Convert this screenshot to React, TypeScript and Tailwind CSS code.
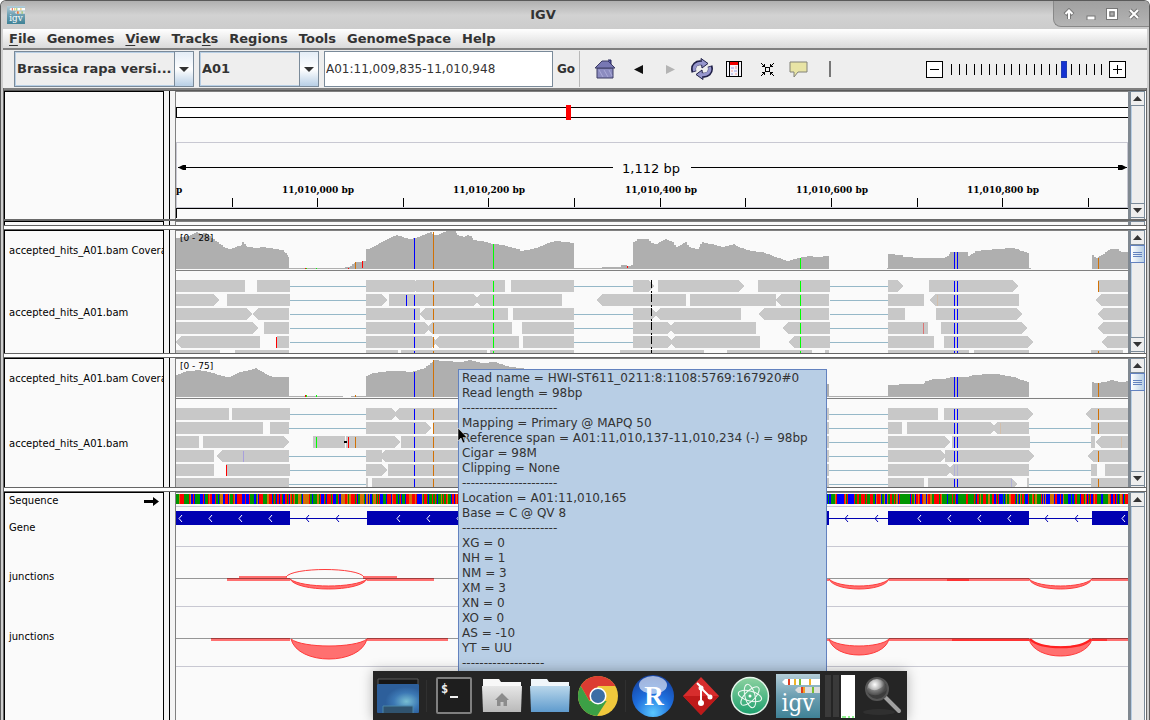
import React from "react";

type Pt = [number, number];
type Read = [number, number, ("l" | "r")?];
type Mark = [number, number, number, string];

const GREEN = "#00ff00";
const BLUE = "#0000ff";
const ORANGE = "#d17105";
const RED = "#ff0000";

/* Staircase outline of a coverage histogram segment. */
function stairs(points: Pt[], base: number): string {
  let d = `M${points[0][0]} ${base}`;
  for (let i = 0; i < points.length - 1; i++) {
    const [x1, y1] = points[i];
    const [x2, y2] = points[i + 1];
    const n = Math.max(1, Math.round((x2 - x1) / 2));
    for (let k = 0; k < n; k++) {
      const y = Math.round(y1 + ((y2 - y1) * k) / n);
      d += `V${y}H${Math.round(x1 + ((x2 - x1) * (k + 1)) / n)}`;
    }
  }
  return d + `V${base}Z`;
}

function readPath([a, b, dir]: Read, y: number): string {
  if (dir === "r") return `M${a} ${y}H${b - 5}L${b} ${y + 6}L${b - 5} ${y + 12}H${a}Z`;
  if (dir === "l") return `M${a + 5} ${y}H${b}V${y + 12}H${a + 5}L${a} ${y + 6}Z`;
  return `M${a} ${y}H${b}V${y + 12}H${a}Z`;
}

const coverageOne: Pt[][] = [
  [[176, 238], [182, 237], [190, 235], [196, 232], [200, 234], [205, 233], [209, 236], [213, 239], [217, 242], [221, 245], [223, 247], [228, 249], [235, 247], [241, 245], [242, 242], [244, 244], [247, 247], [257, 248], [262, 247], [275, 249], [282, 250], [285, 253], [288, 257], [289, 258]],
  [[345, 267], [348, 267], [352, 264], [355, 262], [366, 261]],
  [[366, 249], [370, 248], [374, 246], [383, 241], [389, 238], [393, 236], [396, 235], [402, 237], [408, 239], [415, 238], [420, 236], [425, 234], [430, 232], [433, 235], [437, 235], [441, 233], [446, 231], [454, 231], [457, 235], [463, 237], [467, 235], [470, 236], [473, 240], [480, 241], [486, 242], [493, 244], [503, 245], [510, 247], [518, 249], [520, 251], [526, 250], [532, 249], [538, 247], [545, 244], [550, 242], [556, 241], [565, 242], [574, 243]],
  [[602, 267], [620, 267], [621, 265], [626, 265], [627, 266], [633, 265]],
  [[633, 242], [637, 239], [647, 239], [651, 243], [656, 244], [661, 241], [665, 239], [672, 242], [676, 247], [680, 245], [685, 242], [689, 247], [697, 249], [702, 242], [710, 244], [723, 247], [733, 244], [738, 247], [750, 251], [762, 252], [772, 256], [781, 259], [788, 261], [797, 258], [809, 256], [815, 257], [829, 256]],
  [[888, 254], [901, 255], [903, 257], [923, 258], [943, 258], [947, 256], [950, 252], [966, 252], [968, 256], [973, 253], [975, 251], [996, 249], [1013, 248], [1017, 249], [1020, 251], [1029, 253]],
  [[1092, 255], [1096, 258], [1101, 255], [1105, 252], [1110, 249], [1117, 249], [1121, 252], [1128, 252]],
];

const coverageTwo: Pt[][] = [
  [[176, 375], [181, 373], [186, 371], [190, 371], [197, 370], [205, 371], [213, 373], [221, 376], [229, 377], [237, 373], [243, 371], [250, 370], [255, 368], [260, 371], [267, 375], [274, 377], [280, 377], [289, 377]],
  [[366, 376], [372, 373], [390, 371], [402, 371], [410, 372], [415, 371], [424, 368], [430, 363], [433, 360], [445, 361], [460, 362], [470, 360], [480, 363], [495, 362], [505, 366], [520, 368], [540, 372], [574, 374]],
  [[633, 374], [700, 375], [760, 378], [829, 384]],
  [[888, 385], [907, 384], [922, 384], [925, 381], [932, 379], [942, 379], [952, 377], [965, 377], [974, 375], [988, 374], [996, 374], [1007, 376], [1014, 377], [1020, 380], [1029, 382]],
  [[1092, 382], [1096, 383], [1103, 382], [1110, 380], [1120, 382], [1128, 381]],
];

const readsOne: Read[][] = [
  [[176, 245], [257, 290], [366, 420, "r"], [416, 505], [511, 574], [633, 654, "r"], [658, 744, "r"], [758, 830], [888, 903, "r"], [929, 1018, "r"], [1098, 1128]],
  [[176, 219, "r"], [227, 290], [366, 387, "r"], [389, 479, "r"], [475, 562, "l"], [597, 686, "l"], [690, 776], [776, 829, "l"], [888, 924], [930, 1019, "l"], [1096, 1128, "l"]],
  [[176, 252, "r"], [253, 289, "l"], [366, 420], [420, 508, "l"], [513, 574], [633, 657, "r"], [655, 741, "l"], [759, 829, "l"], [888, 905], [936, 1022, "r"], [1098, 1128, "l"]],
  [[176, 258, "r"], [264, 289], [366, 430, "r"], [427, 512, "l"], [522, 574], [633, 673, "r"], [669, 756, "l"], [783, 830, "l"], [888, 928], [941, 1027, "r"], [1098, 1128, "l"]],
  [[176, 260, "l"], [277, 289], [366, 437, "r"], [434, 519, "l"], [523, 574], [633, 673, "r"], [670, 760, "l"], [789, 830, "l"], [888, 934], [944, 1033, "r"], [1102, 1128, "l"]],
  [[176, 220], [235, 289], [366, 398], [401, 487], [490, 574], [620, 704], [727, 812], [825, 829], [888, 969], [974, 1029], [1091, 1123]],
];

const readsTwo: Read[][] = [
  [[176, 229], [232, 290], [366, 397, "r"], [394, 500, "l"], [827, 829], [888, 938], [944, 1033, "r"], [1086, 1128, "l"]],
  [[176, 263], [270, 289], [366, 431, "r"], [433, 500], [827, 829], [888, 902], [907, 996, "r"], [992, 1029, "l"], [1091, 1128]],
  [[176, 199], [203, 289, "r"], [313, 345], [346, 400, "r"], [401, 500], [827, 829], [888, 950, "r"], [952, 1030], [1091, 1095], [1096, 1128, "l"]],
  [[176, 214], [217, 289, "l"], [366, 382], [380, 500, "l"], [827, 829], [888, 946, "r"], [945, 1034, "r"], [1088, 1128, "l"]],
  [[176, 214], [226, 290], [366, 387, "r"], [388, 500], [827, 829], [888, 952, "r"], [948, 1029, "l"], [1091, 1097], [1105, 1128]],
  [[176, 289], [366, 368], [372, 500], [827, 829], [888, 924], [928, 1017, "r"], [1027, 1029], [1091, 1128]],
];

/* [row, x1, x2] of spliced gaps. */
const gapsOne = [0, 1, 2, 3, 4].flatMap((r) =>
  ([[290, 367], [574, 633], [830, 889]] as Pt[])
    .filter((g) => !(r === 1 && g[0] === 574))
    .map((g): [number, number, number] => [r, g[0], g[1]])
);
const gapsTwo: [number, number, number][] = [
  ...[0, 1, 3, 4, 5].map((r): [number, number, number] => [r, 289, 367]),
  ...[0, 1, 2, 3, 4, 5].map((r): [number, number, number] => [r, 829, 889]),
  ...[1, 2, 4, 5].map((r): [number, number, number] => [r, 1029, 1092]),
];

const row = (x: number, top: number, rows: number[], color: string): Mark[] =>
  rows.map((r) => [x, top + r * 14 + 1, 11, color]);

const marksOne: Mark[] = [
  [414, 238, 31, BLUE], [433, 232, 37, ORANGE], [493, 244, 25, GREEN],
  [362, 261, 7, RED], [355, 262, 7, ORANGE], [305, 268, 1, RED], [306, 268, 1, GREEN], [316, 268, 1, GREEN], [348, 268, 1, RED],
  [627, 266, 2, RED], [800, 258, 11, GREEN], [954, 252, 17, BLUE], [957, 252, 17, BLUE], [1098, 258, 11, ORANGE],
  ...row(414, 280, [1, 2, 3, 4, 5], BLUE), ...row(406, 280, [1], BLUE),
  ...row(433, 280, [0, 1, 2, 3, 4, 5], ORANGE), ...row(493, 280, [0, 1, 2, 3, 4, 5], GREEN),
  ...row(276, 280, [4], RED), ...row(800, 280, [0, 1, 2, 3, 4, 5], GREEN),
  ...row(954, 280, [0, 1, 2, 3, 4, 5], BLUE), ...row(957, 280, [0, 1, 2, 3, 4, 5], BLUE),
  ...row(1098, 280, [0, 5], ORANGE), ...row(923, 280, [3], "#dc7373"), ...row(937, 280, [1], "#d2beaa"),
];

const marksTwo: Mark[] = [
  [414, 372, 25, BLUE], [433, 360, 37, ORANGE], [305, 395, 2, RED], [306, 395, 2, GREEN], [316, 395, 2, GREEN], [355, 395, 2, ORANGE],
  [954, 377, 20, BLUE], [957, 377, 20, BLUE], [1098, 383, 14, ORANGE],
  ...row(414, 408, [0, 1, 2, 3, 4, 5], BLUE), ...row(433, 408, [0, 1, 2, 3, 4, 5], ORANGE),
  ...row(954, 408, [0, 1, 2, 3, 5], BLUE), ...row(957, 408, [0, 1, 2, 3, 5], BLUE),
  ...row(954, 408, [4], "#b0b0d8"), ...row(957, 408, [4], "#b0b0d8"),
  ...row(1098, 408, [0, 1, 3, 5], ORANGE), ...row(316, 408, [2], GREEN), ...row(348, 408, [2], RED), ...row(355, 408, [2], ORANGE),
  ...row(243, 408, [3], "#a8a0dc"), ...row(226, 408, [4], RED), ...row(1000, 408, [1], "#d2beaa"), ...row(1121, 408, [2], "#d2beaa"),
  ...row(1011, 408, [5], "#b0b0d8"),
];

function AlignmentChart({
  top, height, base, coverage, baseline, firstRow, reads, gaps, marks, range, children,
}: {
  top: number; height: number; base: number; coverage: Pt[][]; baseline: Pt[]; firstRow: number;
  reads: Read[][]; gaps: [number, number, number][]; marks: Mark[]; range: string; children?: React.ReactNode;
}) {
  return (
    <svg width="100%" height={height} className="block" shapeRendering="crispEdges">
      <g transform={`translate(-176 ${-top})`}>
        {coverage.map((c, i) => <path key={i} d={stairs(c, base)} fill="#afafaf" />)}
        {baseline.map(([a, b]) => <rect key={a} x={a} y={base - 1} width={b - a} height={1} fill="#afafaf" />)}
        <rect x={176} y={base + 1} width={4000} height={1} fill="#808080" />
        {gaps.map(([r, a, b], i) => <rect key={i} x={a} y={firstRow + r * 14 + 6} width={b - a} height={1} fill="#96b8c8" />)}
        {reads.map((list, r) => <path key={r} d={list.map((x) => readPath(x, firstRow + r * 14)).join("")} fill="#c8c8c8" />)}
        {marks.map(([x, y, h, c], i) => <rect key={i} x={x} y={y} width={1} height={h} fill={c} />)}
        {children}
        <text x={180} y={top + 10} fontSize={9} className="font-['DejaVu_Sans',sans-serif]">{range}</text>
      </g>
    </svg>
  );
}

/* Nucleotide colour strip, one column per pixel. */
const sequence = (() => {
  const colors = ["#009600", "#ff0000", "#0000ff", "#d17105"];
  const paths = ["", "", "", ""];
  let seed = 20117;
  let x = 176;
  while (x < 1128) {
    seed = (seed * 1103515245 + 12345) % 2147483648;
    const v = (seed >> 8) % 100;
    const c = v < 32 ? 0 : v < 62 ? 1 : v < 82 ? 2 : 3;
    const w = 1 + ((seed >> 17) % 10 < 6 ? 0 : (seed >> 20) % 3);
    paths[c] += `M${x} 494h${w}v10h${-w}z`;
    x += w;
  }
  return paths.map((d, i) => ({ d, color: colors[i] }));
})();

const Chevron = ({ x, color }: { x: number; color: string }) => (
  <path d={`M${x + 3} 515L${x} 518.5L${x + 3} 522`} fill="none" stroke={color} strokeWidth={1} shapeRendering="auto" />
);

function arc(a: number, b: number, y: number, inner: number, outer: number): string {
  const w = (b - a) * 0.15;
  const k = (v: number) => y + ((v - y) * 4) / 3;
  return `M${a} ${y}C${a + w} ${k(inner)} ${b - w} ${k(inner)} ${b} ${y}C${b - w * 0.6} ${k(outer)} ${a + w * 0.6} ${k(outer)} ${a} ${y}Z`;
}

function FeatureChart() {
  return (
    <svg width="100%" height={228} className="block" shapeRendering="crispEdges">
      <g transform="translate(-176 -493)">
        {sequence.map((s) => <path key={s.color} d={s.d} fill={s.color} />)}
        {[506, 546, 606, 666].map((y) => <rect key={y} x={176} y={y} width={4000} height={1} fill="#c8c8d2" />)}
        <rect x={176} y={518} width={952} height={1} fill="#0000b2" />
        {([[176, 290], [367, 574], [633, 829], [888, 1029], [1092, 1128]] as Pt[]).map(([a, b]) => (
          <rect key={a} x={a} y={511} width={b - a} height={14} fill="#0000b2" />
        ))}
        {[179, 209, 239, 269, 397, 427, 457, 918, 948, 978, 1008, 1122].map((x) => <Chevron key={x} x={x} color="#ffffff" />)}
        {[306, 336, 845, 875, 1045, 1075].map((x) => <Chevron key={x} x={x} color="#0000b2" />)}

        {([[239, 287, 576, 2], [363, 397, 576, 2], [227, 290, 579, 2], [367, 434, 579, 2], [827, 829, 579, 2], [889, 1029, 579, 2], [1092, 1128, 579, 2],
          [211, 290, 639, 2], [367, 448, 639, 2], [827, 829, 639, 2], [889, 1029, 639, 2], [1092, 1128, 639, 2]] as [number, number, number, number][]).map(([a, b, y, h], i) => (
          <rect key={i} x={a} y={y} width={b - a} height={h} fill="#ff7070" />
        ))}
        {([[947, 969, 579], [952, 1029, 639], [1091, 1107, 639]] as [number, number, number][]).map(([a, b, y]) => (
          <rect key={a} x={a} y={y} width={b - a} height={2} fill="#ff3232" />
        ))}
        <rect x={176} y={578} width={4000} height={1} fill="#969696" />
        <rect x={176} y={638} width={4000} height={1} fill="#969696" />
        {([[239, 287, 578], [363, 397, 578], [227, 290, 578], [367, 434, 578], [889, 1029, 578], [1092, 1128, 578],
          [211, 290, 638], [367, 448, 638], [889, 1029, 638], [1092, 1128, 638]] as [number, number, number][]).map(([a, b, y], i) => (
          <rect key={i} x={a} y={y} width={b - a} height={1} fill="#a03c3c" />
        ))}
        <g fill="#ff7070" stroke="#ff3c3c" strokeWidth={1} shapeRendering="auto">
          <path d="M286 577C292 567 358 567 364 577" fill="none" />
          <path d={arc(290, 367, 579, 586, 589)} />
          <path d={arc(291, 367, 639, 646, 659)} />
          <path d={arc(829, 889, 579, 586, 589)} />
          <path d={arc(1029, 1092, 579, 586, 589)} />
          <path d={arc(829, 889, 639, 646, 655)} />
          <path d={arc(1029, 1092, 639, 647, 656)} />
          <path d="M1030 639C1041 650 1081 650 1091 639" fill="none" stroke="#ff2020" strokeWidth={2} />
        </g>
      </g>
    </svg>
  );
}

function RulerChart() {
  const labels: [number, string][] = [[318, "11,010,000 bp"], [489, "11,010,200 bp"], [661, "11,010,400 bp"], [832, "11,010,600 bp"], [1003, "11,010,800 bp"]];
  return (
    <svg width="100%" height={127} className="block" shapeRendering="crispEdges">
      <rect width="100%" x={0} y={16} height={10} fill="#ffffff" />
      <rect width="100%" x={0} y={15} height={1} />
      <rect width="100%" x={0} y={25} height={1} />
      <g transform="translate(-176 -92)">
        <rect x={176} y={107} width={1} height={11} />
        <rect x={566} y={105} width={5} height={15} fill="#ff0000" />
        <path d="M176.5 207.5V142.5H1127.5V207.5Z" fill="none" stroke="#c8c8d2" />
        <path d="M178 167.5H613M691 167.5H1127" stroke="#000" />
        <path d="M178 167.5L183 165H186V170H183ZM1127 167.5L1122 165H1118V170H1122Z" shapeRendering="auto" />
        {[232, 317, 403, 488, 574, 660, 745, 831, 917, 1002, 1088].map((x) => <rect key={x} x={x} y={198} width={1} height={9} />)}
        <path d="M176.5 218V208.5H4000" fill="none" stroke="#000" />
        <text x={651} y={173} fontSize={13} textAnchor="middle" className="font-['DejaVu_Sans',sans-serif]">1,112 bp</text>
        <g fontSize={10} fontWeight={700} textAnchor="middle" className="font-['DejaVu_Serif_Condensed','DejaVu_Serif',serif]">
          {labels.map(([x, t]) => <text key={t} x={x} y={193}>{t}</text>)}
          <text x={176} y={193} textAnchor="start">p</text>
        </g>
      </g>
    </svg>
  );
}

function ScrollBar({ thumb, down = true }: { thumb?: boolean; down?: boolean }) {
  return (
    <div className="flex w-[18px] shrink-0 flex-col border-l-2 border-[#808890] bg-white pr-px">
      <div className="flex min-h-0 flex-1 flex-col border-x border-t border-[#7a8a99] bg-[#eeeeee]">
        <button aria-label="Scroll up" className="flex h-[14px] shrink-0 items-center justify-center border-b border-[#7a8a99] bg-[#eeeeee]">
          <svg width="9" height="5"><path d="M0 5L4.5 0L9 5Z" fill="#333" /></svg>
        </button>
        {thumb && (
          <div className="-mx-px flex h-[18px] shrink-0 flex-col items-center justify-center gap-px border border-[#6382bf] bg-linear-to-r from-white to-[#b8cfe5]">
            <span className="h-px w-[9px] bg-[#6382bf]" />
            <span className="h-px w-[9px] bg-[#6382bf]" />
            <span className="h-px w-[9px] bg-[#6382bf]" />
          </div>
        )}
        <div className="min-h-0 flex-1 border-l border-[#b8cfe5]" />
        {down && (
          <button aria-label="Scroll down" className="mb-px flex h-[15px] shrink-0 items-center justify-center border-y border-[#7a8a99] bg-[#eeeeee]">
            <svg width="9" height="5"><path d="M0 0L4.5 5L9 0Z" fill="#333" /></svg>
          </button>
        )}
      </div>
    </div>
  );
}

function Panel({ names, children, thumb, down, className }: { names?: React.ReactNode; children?: React.ReactNode; thumb?: boolean; down?: boolean; className: string }) {
  return (
    <section className={"flex min-h-0 overflow-hidden " + className}>
      <div className="flex w-[160px] shrink-0 flex-col overflow-hidden border border-b-0 border-black text-[10px] leading-4 whitespace-nowrap text-black">{names}</div>
      <div className="w-[5px] shrink-0 bg-[#f4f4f4]" />
      <div className="w-px shrink-0 bg-black" />
      <div className="w-[5px] shrink-0 bg-[#f4f4f4]" />
      <div className="min-w-0 flex-1 overflow-hidden border-t border-l border-[#808080]">{children}</div>
      <ScrollBar thumb={thumb} down={down} />
    </section>
  );
}

function Name({ children, className }: { children: React.ReactNode; className: string }) {
  return <div className={"flex shrink-0 items-center pl-[4px] " + className}>{children}</div>;
}

function Combo({ label, value, className }: { label: string; value: string; className: string }) {
  return (
    <div className={"relative h-9 border border-[#7a8a99] " + className}>
      <select aria-label={label} className="h-full w-full appearance-none border border-[#b8cfe5] bg-[#eeeeee] pr-5 pl-px text-[13px] font-bold text-[#333] outline-none">
        <option>{value}</option>
      </select>
      <span className="pointer-events-none absolute inset-y-0 right-0 flex w-[19px] items-center justify-center border-l border-[#7a8a99] bg-linear-to-b from-[#e4edf6] via-white to-[#b8cfe5]">
        <svg width="10" height="5"><path d="M0 0H10L5 5Z" fill="#333" /></svg>
      </span>
    </div>
  );
}

const menus: [string, string, string][] = [
  ["", "F", "ile"], ["Genomes", "", ""], ["", "V", "iew"], ["Trac", "k", "s"], ["Regions", "", ""], ["Tools", "", ""], ["GenomeSpace", "", ""], ["Help", "", ""],
];

const details = [
  "Read name = HWI-ST611_0211:8:1108:5769:167920#0", "Read length = 98bp", "----------------------", "Mapping = Primary @ MAPQ 50",
  "Reference span = A01:11,010,137-11,010,234 (-) = 98bp", "Cigar = 98M", "Clipping = None", "----------------------",
  "Location = A01:11,010,165", "Base = C @ QV 8", "----------------------", "XG = 0", "NH = 1", "NM = 3", "XM = 3", "XN = 0", "XO = 0", "AS = -10", "YT = UU", "-------------------",
];

function IgvLogo({ size }: { size: number }) {
  return (
    <svg width={size} height={size} viewBox="0 0 44 44">
      <defs><linearGradient id="igv-bg" x2="0" y2="1"><stop offset="0" stopColor="#b4cdd8" /><stop offset=".5" stopColor="#6d9fb2" /><stop offset="1" stopColor="#3f8296" /></linearGradient></defs>
      <rect width="44" height="44" fill="url(#igv-bg)" />
      <path d="M6 8L9 5H44V11H9Z" fill="#fff" />
      <path d="M22 13H44V19H22L19 16Z" fill="#dcdcdc" />
      <path d="M13 5v6M26 13v6" stroke="#e03c1e" strokeWidth="2" />
      <path d="M19 5v6M34 5v6" stroke="#f0b428" strokeWidth="2" />
      <path d="M24 5v6M37 13v6" stroke="#78be32" strokeWidth="2" />
      <path d="M28 13v6" stroke="#f0a028" strokeWidth="2" />
      <text x="22" y="37" textAnchor="middle" fontSize="24" fill="#fff" className="font-['DejaVu_Serif_Condensed','DejaVu_Serif',serif]">igv</text>
    </svg>
  );
}

function DockButton({ label, children, className }: { label: string; children: React.ReactNode; className: string }) {
  return <button aria-label={label} className={"flex shrink-0 items-center justify-center " + className}>{children}</button>;
}

function Dock() {
  return (
    <nav aria-label="Dock" className="absolute bottom-0 left-[372px] flex h-[49px] w-[534px] items-center bg-[#252525] pl-1 shadow-[0_0_12px_rgba(0,0,0,0.3)]">
      <DockButton label="Show desktop" className="w-[42px]">
        <svg width="42" height="36"><defs><radialGradient id="desk" cx=".7" cy=".6"><stop offset="0" stopColor="#78bed2" /><stop offset=".6" stopColor="#3c78b4" /><stop offset="1" stopColor="#2d5f9b" /></radialGradient></defs>
          <path d="M1 6V1H41V6" fill="#161616" stroke="#5a5a5a" /><rect y="6" width="42" height="29" rx="1" fill="url(#desk)" /><path d="M6 35V28H36V35" fill="#30536e" stroke="#4b87a8" /></svg>
      </DockButton>
      <span className="mx-[7px] h-8 w-px bg-[#303030]" />
      <DockButton label="Terminal" className="ml-[2px] w-[36px]">
        <svg width="36" height="37"><rect x="1" y="1" width="34" height="35" rx="1" fill="#1e1e1e" stroke="#808080" strokeWidth="2" /><text x="5" y="16" fontSize="12" fontWeight="700" fill="#f0f0f0" className="font-['DejaVu_Sans_Mono',monospace]">$</text><path d="M14 20H22" stroke="#f0f0f0" strokeWidth="2" /></svg>
      </DockButton>
      <DockButton label="Home folder" className="ml-[9px] w-[42px]">
        <svg width="42" height="35"><defs><linearGradient id="fg" x2="0" y2="1"><stop offset="0" stopColor="#e6e6e6" /><stop offset="1" stopColor="#b9b9b9" /></linearGradient></defs>
          <path d="M2 1H18L20 4H40V10H2Z" fill="#f8f8f8" /><path d="M1 8H41L40 34H2Z" fill="url(#fg)" /><path d="M21 15L28 22H26V28H22.500V24H19.500V28H16V22H14Z" fill="#8c8c8c" /></svg>
      </DockButton>
      <DockButton label="Files" className="ml-[6px] w-[42px]">
        <svg width="42" height="35"><defs><linearGradient id="fb" x2="0" y2="1"><stop offset="0" stopColor="#b9d7eb" /><stop offset="1" stopColor="#5f9bcd" /></linearGradient></defs>
          <path d="M2 1H18L20 4H40V10H2Z" fill="#f0f6fa" /><path d="M1 8H41L40 34H2Z" fill="url(#fb)" /></svg>
      </DockButton>
      <DockButton label="Browser" className="ml-[6px] w-[42px]">
        <svg width="42" height="42" viewBox="-21 -21 42 42"><circle r="20" fill="#f0c83c" /><path d="M-17.300 -10A20 20 0 0 1 17.300 -10H0L-8.700 5Z" fill="#dc3c32" /><path d="M-17.300 -10L-8.700 5L0 10L-1 20A20 20 0 0 1 -17.300 -10Z" fill="#3ca046" /><path d="M-1 20L8.700 5L-8.700 5Z" fill="#3ca046" /><circle r="8.500" fill="#fff" /><circle r="7" fill="#3c6ea5" /></svg>
      </DockButton>
      <span className="mx-[6px] h-8 w-px bg-[#303030]" />
      <DockButton label="R" className="w-[42px]">
        <svg width="42" height="44"><defs><radialGradient id="rg" cx=".5" cy=".9" r=".9"><stop offset="0" stopColor="#5ac8ff" /><stop offset=".5" stopColor="#1e6edc" /><stop offset="1" stopColor="#1440a0" /></radialGradient></defs>
          <circle cx="21" cy="22" r="21" fill="url(#rg)" /><ellipse cx="21" cy="11" rx="14" ry="9" fill="#fff" opacity=".6" /><text x="22" y="31" textAnchor="middle" fontSize="27" fontWeight="700" fill="#fff" className="font-['Liberation_Serif',serif]">R</text></svg>
      </DockButton>
      <DockButton label="Git" className="ml-2 w-[38px]">
        <svg width="38" height="40"><path d="M19 1L37 20L19 39L1 20Z" fill="#d72d2d" /><path d="M19 20H37L19 39L1 20Z" fill="#be1919" /><path d="M15 7L19 11V27M19 12L28 21" stroke="#fff" strokeWidth="2" fill="none" /><circle cx="19" cy="12" r="2.500" fill="#fff" /><circle cx="19" cy="27" r="3" fill="#fff" /><circle cx="28" cy="21" r="2.500" fill="#fff" /></svg>
      </DockButton>
      <DockButton label="Atom" className="ml-[10px] w-[40px]">
        <svg width="40" height="40" viewBox="-20 -20 40 40"><defs><linearGradient id="at" x2="0" y2="1"><stop offset="0" stopColor="#8cd2a0" /><stop offset="1" stopColor="#1ea06e" /></linearGradient></defs>
          <circle r="18.500" fill="url(#at)" stroke="#e6f5ec" strokeWidth="1.500" /><g fill="none" stroke="#f0faf4" strokeWidth="1"><ellipse rx="12" ry="5" transform="rotate(15)" /><ellipse rx="12" ry="5" transform="rotate(75)" /><ellipse rx="12" ry="5" transform="rotate(135)" /></g><circle r="1.500" fill="#fff" /></svg>
      </DockButton>
      <DockButton label="IGV" className="ml-[6px] w-[44px]"><IgvLogo size={44} /></DockButton>
      <svg width="34" height="44" className="ml-1 shrink-0"><path d="M1 1h6v42h-6zM9 1h6v42h-6z" fill="#3a3a3a" /><rect x="17" y="1" width="14" height="43" fill="#fff" /><path d="M18 43h4M24 43h2M28 43h2" stroke="#1ee61e" strokeWidth="1" /></svg>
      <DockButton label="Search" className="ml-[3px] w-[42px]">
        <svg width="42" height="42"><defs><radialGradient id="mg" cx=".4" cy=".3"><stop offset="0" stopColor="#fff" /><stop offset=".5" stopColor="#b4b4b4" /><stop offset="1" stopColor="#3c3c3c" /></radialGradient></defs>
          <ellipse cx="18" cy="37" rx="16" ry="3" fill="#303030" /><path d="M24 22L38 36" stroke="#a0a0a0" strokeWidth="4" strokeLinecap="round" /><circle cx="16" cy="14" r="11" fill="url(#mg)" stroke="#555" strokeWidth="2" /><path d="M6 15Q16 22 26 11" stroke="#555" fill="none" strokeWidth="5" opacity=".5" /></svg>
      </DockButton>
    </nav>
  );
}

const iconButton = "flex h-6 shrink-0 items-center justify-center";

export default function App() {
  return (
    <main className="relative flex h-screen flex-col overflow-hidden rounded-t-md border-x border-t border-[#5a5a5a] bg-[#cfcfcf] px-[2px] font-['DejaVu_Sans',sans-serif] text-[12px] text-[#333]">
      <header className="-mx-[2px] grid h-7 shrink-0 grid-cols-[32px_1fr_96px] bg-linear-to-b from-[#b0b0b0] via-[#d2d2d2] to-[#cccccc]">
        <div className="flex items-center pl-[6px]"><IgvLogo size={18} /></div>
        <h1 className="flex items-center justify-center text-[13px] font-bold">IGV</h1>
        <div className="mb-[2px] flex items-center justify-around rounded-bl-lg border-b border-l border-[#888] bg-linear-to-b from-[#a0a0a0] to-[#b4b4b4] px-1">
          <button aria-label="Shade"><svg width="12" height="12"><path d="M6 11V3M2 6.500L6 2.500L10 6.500" stroke="#777" strokeWidth="4" fill="none" /><path d="M6 11V3M2.500 6L6 2.500L9.500 6" stroke="#fff" strokeWidth="2" fill="none" /></svg></button>
          <button aria-label="Minimize"><svg width="12" height="12"><rect x="2" y="8" width="8" height="4" fill="#fff" stroke="#777" /></svg></button>
          <button aria-label="Maximize"><svg width="12" height="12"><path d="M1.500 1.500H10.500V10.500H1.500Z" fill="none" stroke="#777" strokeWidth="3" /><path d="M2 2H10V10H2Z" fill="none" stroke="#fff" strokeWidth="2" /><path d="M4 4H8V8H4Z" fill="#b0b0b0" stroke="#777" /></svg></button>
          <button aria-label="Close"><svg width="12" height="12"><path d="M2 2L10 10M10 2L2 10" stroke="#777" strokeWidth="4" /><path d="M2 2L10 10M10 2L2 10" stroke="#fff" strokeWidth="2" /></svg></button>
        </div>
      </header>

      <nav className="flex h-[21px] shrink-0 items-center gap-[11px] border-b-2 border-[#808080] bg-linear-to-b from-white to-[#dadada] pl-[6px] text-[13px] font-bold">
        {menus.map(([a, u, b]) => (
          <button key={a + u + b} className="leading-4">{a}{u && <span className="underline underline-offset-2">{u}</span>}{b}</button>
        ))}
      </nav>

      <div className="flex h-[38px] shrink-0 items-center bg-[#eeeeee] pr-[21px] pl-[11px]">
        <Combo label="Genome" value="Brassica rapa versi..." className="w-[180px] shrink-0" />
        <Combo label="Chromosome" value="A01" className="ml-[5px] w-[120px] shrink-0" />
        <input aria-label="Locus" defaultValue="A01:11,009,835-11,010,948" className="ml-[5px] h-9 w-[229px] shrink-0 border border-[#7a8a99] bg-white pl-px outline-none" />
        <button className="h-9 w-[27px] shrink-0 border-r border-[#b8b8b8] text-center font-bold">Go</button>
        <button aria-label="Home" className={iconButton + " ml-[13px] w-6"}>
          <svg width="22" height="20"><path d="M3 9H19V19H3Z" fill="#8c8cc0" stroke="#3c3c64" /><path d="M1 9L8 2H14L21 9Z" fill="#7878b4" stroke="#3c3c64" /><path d="M14 1H17V5" fill="#4646a0" stroke="#28285a" /><path d="M5 11L9 18M10 11L14 18M15 11L18 17" stroke="#aaaad7" /></svg>
        </button>
        <button aria-label="Back" className={iconButton + " ml-[14px] w-[14px]"}><svg width="9" height="9"><path d="M9 0V9L0 4.500Z" fill="#111" /></svg></button>
        <button aria-label="Forward" disabled className={iconButton + " ml-[18px] w-[14px]"}><svg width="9" height="9"><path d="M0 0V9L9 4.500Z" fill="#b4b4b4" /></svg></button>
        <button aria-label="Refresh" className={iconButton + " ml-[13px] w-6"}>
          <svg width="22" height="22" viewBox="0 0 22 22">
            <g id="turn">
              <path d="M3 14C1 7 6 4 11 5" fill="none" stroke="#1e1e46" strokeWidth="5" />
              <path d="M10 .500L17 5.500L11 10Z" fill="#9696cd" stroke="#1e1e46" />
              <path d="M3.500 13C2 8 6 4.500 12 5.500" fill="none" stroke="#9696cd" strokeWidth="3" />
            </g>
            <use href="#turn" transform="rotate(180 11 11)" />
          </svg>
        </button>
        <button aria-label="Region of interest" className={iconButton + " ml-[10px] w-5"}>
          <svg width="16" height="16" shapeRendering="crispEdges"><rect width="16" height="16" /><rect x="1" y="1" width="14" height="14" fill="#f4f4fa" /><rect x="3" y="1" width="1" height="14" /><rect x="12" y="1" width="1" height="14" /><rect x="4" y="1" width="8" height="3" fill="#f00000" /><path d="M5 6h3v2h-3zM8 9h3v2h-3zM5 12h2v2h-2z" fill="#c8c8f0" /><path d="M9 5h2v3h-2zM5 9h2v2h-2zM9 12h2v2h-2z" fill="#f5c8c8" /></svg>
        </button>
        <button aria-label="Collapse" className={iconButton + " ml-[13px] w-5"}>
          <svg width="13" height="13" shapeRendering="crispEdges"><path d="M4.500 4.500H8.500V8.500H4.500Z" fill="none" stroke="#000" /><path d="M0 0h1v1h-1zM1 1h1v1h-1zM2 2h1v1h-1zM3 1h1v3h-3v-1h2zM12 0h1v1h-1zM11 1h1v1h-1zM10 2h1v1h-1zM9 1h1v2h2v1h-3zM0 12h1v1h-1zM1 11h1v1h-1zM2 10h1v1h-1zM1 9h3v3h-1v-2h-2zM12 12h1v1h-1zM11 11h1v1h-1zM10 10h1v1h-1zM9 9h3v1h-2v2h-1z" /></svg>
        </button>
        <button aria-label="Popup text" className={iconButton + " ml-[11px] w-5"}>
          <svg width="19" height="18"><path d="M1 2H18V12H9L5 17V12H1Z" fill="#e8e4a5" stroke="#828278" /></svg>
        </button>
        <span className="ml-[21px] h-4 w-[2px] shrink-0 bg-[#777]" />
        <div className="ml-auto flex items-center">
          <button aria-label="Zoom out" className="flex size-[17px] items-center justify-center border border-black bg-white"><svg width="11" height="11"><path d="M1 5.500H10" stroke="#000" /></svg></button>
          <div className="relative mx-[5px] h-[18px] w-[156px]">
            <svg width="156" height="18" className="block" shapeRendering="crispEdges">
              {Array.from({ length: 21 }, (_, i) => <rect key={i} x={Math.round(3 + i * 7.5)} y={4} width={1} height={11} />)}
            </svg>
            <input aria-label="Zoom level" type="range" min={0} max={20} defaultValue={15} className="absolute inset-0 m-0 h-[18px] w-full appearance-none bg-transparent [&::-webkit-slider-thumb]:h-[17px] [&::-webkit-slider-thumb]:w-[6px] [&::-webkit-slider-thumb]:appearance-none [&::-webkit-slider-thumb]:border [&::-webkit-slider-thumb]:border-[#1e3cb4] [&::-webkit-slider-thumb]:bg-[#1432d2]" />
          </div>
          <button aria-label="Zoom in" className="flex size-[17px] items-center justify-center border border-black bg-white"><svg width="11" height="11"><path d="M1 5.500H10M5.500 1V10" stroke="#000" /></svg></button>
        </div>
      </div>

      <div className="flex min-h-0 flex-1 flex-col border-x border-[#666] bg-[#fafafa]">
        <div className="h-[3px] shrink-0 border-b border-[#5a5a5a] bg-[#808080]" />
        <Panel className="h-[128px] shrink-0"><RulerChart /></Panel>
        <div className="h-[2px] shrink-0 bg-[#6a6a6a]" />
        <Panel className="h-[4px] shrink-0" down={false} />
        <div className="h-[5px] shrink-0 border-y border-[#666] bg-white" />

        <Panel
          className="h-[123px] shrink-0"
          thumb
          names={<><Name className="h-10">accepted_hits_A01.bam Covera</Name><Name className="h-[84px]">accepted_hits_A01.bam</Name></>}
        >
          <AlignmentChart top={231} height={122} base={269} coverage={coverageOne} baseline={[[289, 346], [574, 602], [887, 889], [1029, 1031]]} firstRow={280} reads={readsOne} gaps={gapsOne} marks={marksOne} range="[0 - 28]">
            <path d="M651.500 280V353" stroke="#000" strokeWidth={1} strokeDasharray="8 3 2 1" />
          </AlignmentChart>
        </Panel>
        <div className="h-[5px] shrink-0 border-y border-[#666] bg-white" />

        <Panel
          className="h-[129px] shrink-0"
          thumb
          names={<><Name className="h-10">accepted_hits_A01.bam Covera</Name><Name className="h-[90px]">accepted_hits_A01.bam</Name></>}
        >
          <AlignmentChart top={359} height={128} base={397} coverage={coverageTwo} baseline={[[289, 343], [351, 366], [829, 888]]} firstRow={408} reads={readsTwo} gaps={gapsTwo} marks={marksTwo} range="[0 - 75]">
            <rect x={344} y={441} width={3} height={2} />
          </AlignmentChart>
        </Panel>
        <div className="h-[5px] shrink-0 border-y border-[#666] bg-white" />

        <Panel
          className="flex-1"
          down={false}
          names={
            <>
              <Name className="h-4 justify-between pr-1">
                Sequence
                <svg width="15" height="9"><path d="M0 3H9V0L15 4.500L9 9V6H0Z" /></svg>
              </Name>
              <Name className="h-[38px]">Gene</Name>
              <Name className="h-[60px]">junctions</Name>
              <Name className="h-[60px]">junctions</Name>
            </>
          }
        >
          <FeatureChart />
        </Panel>
      </div>

      <div role="tooltip" className="absolute top-[368px] left-[457px] h-[303px] w-[369px] border border-[#6382bf] bg-[#b8cee5] pt-px pl-[3px] text-[12px] leading-[15px] whitespace-nowrap">
        {details.map((t, i) => <p key={i}>{t}</p>)}
      </div>
      <svg width="12" height="18" className="absolute top-[427px] left-[456px]"><path d="M1 0V13L4 10L6 15L8 14L6 9.500H10Z" fill="#000" stroke="#fff" strokeWidth=".5" /></svg>
      <Dock />
    </main>
  );
}
